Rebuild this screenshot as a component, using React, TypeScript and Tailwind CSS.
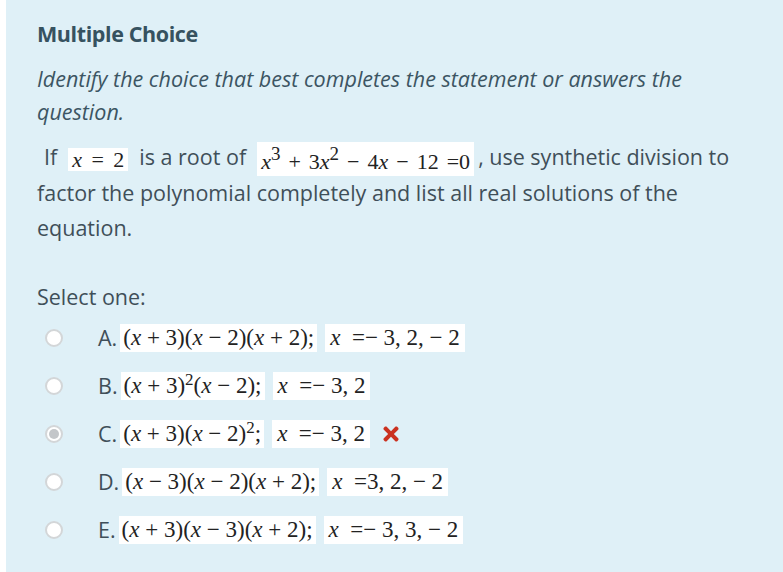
import React from "react";
import { FaTimes } from "react-icons/fa";

type Choice = {
  letter: string;
  left: React.ReactNode;
  right: React.ReactNode;
  checked?: boolean;
  wrong?: boolean;
};

const X = () => <i className="italic">x</i>;

const serif = { fontFamily: '"Liberation Serif", "Times New Roman", serif' };

const MathBox: React.FC<{ children: React.ReactNode; className?: string }> = ({ children, className }) => (
  <span
    className={
      "inline-block bg-white px-[3px] h-[28px] leading-[28px] align-middle text-[23px] text-[#222] whitespace-pre " +
      (className || "")
    }
    style={serif}
  >
    {children}
  </span>
);

const choices: Choice[] = [
  {
    letter: "A.",
    left: (
      <>
        (<X /> + 3)(<X /> − 2)(<X /> + 2);
      </>
    ),
    right: (
      <>
        <X />  =− 3, 2, − 2
      </>
    ),
  },
  {
    letter: "B.",
    left: (
      <>
        (<X /> + 3)<sup className="text-[17px]">2</sup>(<X /> − 2);
      </>
    ),
    right: (
      <>
        <X />  =− 3, 2
      </>
    ),
  },
  {
    letter: "C.",
    left: (
      <>
        (<X /> + 3)(<X /> − 2)<sup className="text-[17px]">2</sup>;
      </>
    ),
    right: (
      <>
        <X />  =− 3, 2
      </>
    ),
    checked: true,
    wrong: true,
  },
  {
    letter: "D.",
    left: (
      <>
        (<X /> − 3)(<X /> − 2)(<X /> + 2);
      </>
    ),
    right: (
      <>
        <X />  =3, 2, − 2
      </>
    ),
  },
  {
    letter: "E.",
    left: (
      <>
        (<X /> + 3)(<X /> − 3)(<X /> + 2);
      </>
    ),
    right: (
      <>
        <X />  =− 3, 3, − 2
      </>
    ),
  },
];

const Radio: React.FC<{ checked?: boolean }> = ({ checked }) => (
  <span className="w-[18px] h-[18px] rounded-full border-[2px] border-[#d3d6d8] bg-white flex items-center justify-center">
    {checked && <span className="w-[10px] h-[10px] rounded-full bg-[#c3c6c9]" />}
  </span>
);

const App: React.FC = () => {
  return (
    <div className="w-[783px] h-[572px] bg-white overflow-hidden" style={{ fontFamily: '"Open Sans", sans-serif' }}>
      <div className="ml-[6px] h-[572px] bg-[#dff0f7] pl-[31px] pr-4 pt-[20px] text-[#3f4f59]">
        <h3 className="text-[21.5px] leading-[28px] font-bold text-[#365260] tracking-[-0.4px]">Multiple Choice</h3>
        <p className="mt-[14px] text-[21.5px] leading-[33px] italic text-[#3c5563] w-[700px]">
          Identify the choice that best completes the statement or answers the question.
        </p>

        <div className="mt-[12px] text-[21.5px] leading-[34.5px] w-[712px]">
          <span className="ml-[7px]">If</span>
          <span
            className="inline-flex justify-between items-center mx-[11px] w-[60px] bg-white h-[23px] leading-[23px] px-[4px] align-middle text-[22px] text-[#222]"
            style={serif}
          >
            <i>x</i>
            <span>=</span>
            <span>2</span>
          </span>
          <span>is a root of</span>
          <span
            className="inline-flex justify-between items-end ml-[11px] mr-[4px] w-[217px] bg-white h-[34px] pb-[2px] px-[4px] align-middle text-[22px] leading-[24px] text-[#222]"
            style={serif}
          >
            <span>
              <i>x</i>
              <sup className="text-[19px]">3</sup>
            </span>
            <span>+</span>
            <span>
              3<i>x</i>
              <sup className="text-[19px]">2</sup>
            </span>
            <span>−</span>
            <span>
              4<i>x</i>
            </span>
            <span>−</span>
            <span>12</span>
            <span>=0</span>
          </span>
          <span>, use synthetic division to factor the polynomial completely and list all real solutions of the equation.</span>
        </div>

        <div className="mt-[35px] text-[21.5px] leading-[34px]">Select one:</div>

        <div>
          {choices.map((c) => (
            <div key={c.letter} className="h-[48px] flex items-center">
              <div className="w-[34px] flex justify-center">
                <Radio checked={c.checked} />
              </div>
              <span className="ml-[27px] text-[21.5px] mr-[3px]">{c.letter}</span>
              <MathBox>{c.left}</MathBox>
              <MathBox className="ml-[8px] px-[5px]">{c.right}</MathBox>
              {c.wrong && <FaTimes className="ml-[10px] text-[#ca3120]" size={22} />}
            </div>
          ))}
        </div>
      </div>
    </div>
  );
};

export default App;
